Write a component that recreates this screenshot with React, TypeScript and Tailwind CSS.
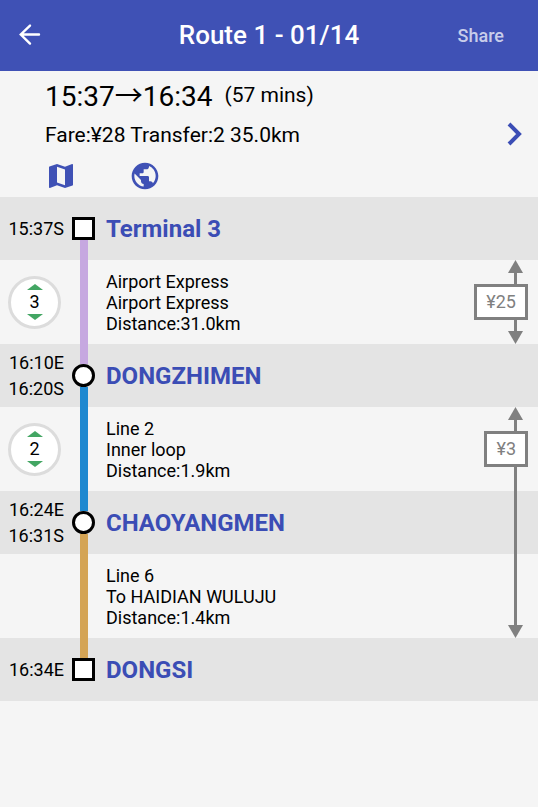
import { MdMap, MdPublic } from 'react-icons/md';

interface Station {
  name: string;
  times: string[];
  terminal?: boolean;
  before?: string;
  after?: string;
}

interface Leg {
  lines: string[];
  color: string;
  options?: number;
}

const stations: Station[] = [
  { name: 'Terminal 3', times: ['15:37S'], terminal: true, after: 'bg-[#c6a8e0]' },
  { name: 'DONGZHIMEN', times: ['16:10E', '16:20S'], before: 'bg-[#c6a8e0]', after: 'bg-[#1e88d0]' },
  { name: 'CHAOYANGMEN', times: ['16:24E', '16:31S'], before: 'bg-[#1e88d0]', after: 'bg-[#d4a455]' },
  { name: 'DONGSI', times: ['16:34E'], terminal: true, before: 'bg-[#d4a455]' },
];

const legs: Leg[] = [
  { lines: ['Airport Express', 'Airport Express', 'Distance:31.0km'], color: 'bg-[#c6a8e0]', options: 3 },
  { lines: ['Line 2', 'Inner loop', 'Distance:1.9km'], color: 'bg-[#1e88d0]', options: 2 },
  { lines: ['Line 6', 'To HAIDIAN WULUJU', 'Distance:1.4km'], color: 'bg-[#d4a455]' },
];

function StationRow({ station }: { station: Station }) {
  return (
    <div className="grid min-h-[63px] grid-cols-[72px_23px_1fr] bg-[#e4e4e4]">
      <div className="flex flex-col justify-center pr-2 text-right text-lg leading-[26px]">
        {station.times.map((time) => (
          <span key={time}>{time}</span>
        ))}
      </div>
      <div className="flex flex-col items-center">
        <div className={`w-2 flex-1 ${station.before ?? ''}`} />
        <div className={`size-[23px] border-3 border-black bg-white ${station.terminal ? '' : 'rounded-full'}`} />
        <div className={`w-2 flex-1 ${station.after ?? ''}`} />
      </div>
      <h2 className="self-center pl-[11px] text-2xl font-bold text-[#3b4db5]">{station.name}</h2>
    </div>
  );
}

function LegRow({ leg }: { leg: Leg }) {
  return (
    <div className="grid min-h-[84px] grid-cols-[72px_23px_1fr]">
      <div className="flex items-center pl-2">
        {leg.options && (
          <button
            type="button"
            className="flex size-[53px] flex-col items-center justify-center rounded-full border-3 border-[#dcdcdc] bg-white text-lg leading-6"
          >
            <svg className="h-[6px] w-4" viewBox="0 0 16 6" fill="#43a663">
              <path d="M0 6 8 0l8 6z" />
            </svg>
            {leg.options}
            <svg className="h-[6px] w-4" viewBox="0 0 16 6" fill="#43a663">
              <path d="M0 0h16L8 6z" />
            </svg>
          </button>
        )}
      </div>
      <div className={`w-2 justify-self-center ${leg.color}`} />
      <div className="self-center pl-[11px] text-lg leading-[21px]">
        {leg.lines.map((line, i) => (
          <p key={i}>{line}</p>
        ))}
      </div>
    </div>
  );
}

// Arrow spanning every leg that is covered by one ticket
function FareSpan({ fare }: { fare: string }) {
  return (
    <div className="col-start-1 row-start-1 mr-[10px] flex flex-col items-end justify-self-end text-[#808080]">
      <svg className="mr-[5px] h-[13px] w-[15px]" viewBox="0 0 15 13" fill="currentColor">
        <path d="M0 13 7.5 0 15 13z" />
      </svg>
      <div className="mr-[11px] h-[11px] w-[3px] bg-[#808080]" />
      <div className="flex h-9 items-center border-3 border-[#808080] bg-white px-[9px] text-lg">{fare}</div>
      <div className="mr-[11px] w-[3px] flex-1 bg-[#808080]" />
      <svg className="mr-[5px] h-[13px] w-[15px]" viewBox="0 0 15 13" fill="currentColor">
        <path d="M0 0h15L7.5 13z" />
      </svg>
    </div>
  );
}

export default function App() {
  return (
    <div className="min-h-screen bg-[#f5f5f5] font-[Roboto,sans-serif] text-black">
      <header className="grid h-[71px] grid-cols-[1fr_auto_1fr] items-center bg-[#3f51b5] text-white">
        <button type="button" aria-label="Back" className="ml-[14px] justify-self-start">
          <svg
            className="size-8"
            viewBox="0 0 32 32"
            fill="none"
            stroke="currentColor"
            strokeWidth="2.4"
            strokeLinecap="round"
          >
            <path d="M25 14.5H6.8M16 5.6 6.8 14.5 16 23.6" />
          </svg>
        </button>
        <h1 className="text-[26px] font-medium">Route 1 - 01/14</h1>
        <button type="button" className="mr-[34px] justify-self-end text-lg font-medium text-[#c8cdea]">
          Share
        </button>
      </header>

      <section className="flex items-center pt-1 pr-[15px] pb-[5px] pl-[45px]">
        <div className="flex-1">
          <p className="mb-1 flex h-10 items-center gap-3 text-[28px] leading-10">
            <span className="flex items-baseline">
              15:37<span className="font-['Noto_Sans_CJK_SC',sans-serif]">→</span>16:34
            </span>
            <span className="text-[21px]">(57 mins)</span>
          </p>
          <p className="text-[21px] leading-8">Fare:¥28 Transfer:2 35.0km</p>
          <div className="mt-[9px] flex gap-[52px] text-[#3f51b5]">
            <button type="button" aria-label="Map">
              <MdMap className="size-8" />
            </button>
            <button type="button" aria-label="Web">
              <MdPublic className="size-8" />
            </button>
          </div>
        </div>
        <button type="button" aria-label="Next route" className="text-[#3b4db5]">
          <svg className="h-6 w-4" viewBox="0 0 16 24" fill="none" stroke="currentColor" strokeWidth="4">
            <path d="m2 2 10 10L2 22" />
          </svg>
        </button>
      </section>

      <main>
        <StationRow station={stations[0]} />
        <div className="grid">
          <div className="col-start-1 row-start-1">
            <LegRow leg={legs[0]} />
          </div>
          <FareSpan fare="¥25" />
        </div>
        <StationRow station={stations[1]} />
        <div className="grid">
          <div className="col-start-1 row-start-1">
            <LegRow leg={legs[1]} />
            <StationRow station={stations[2]} />
            <LegRow leg={legs[2]} />
          </div>
          <FareSpan fare="¥3" />
        </div>
        <StationRow station={stations[3]} />
      </main>
    </div>
  );
}
